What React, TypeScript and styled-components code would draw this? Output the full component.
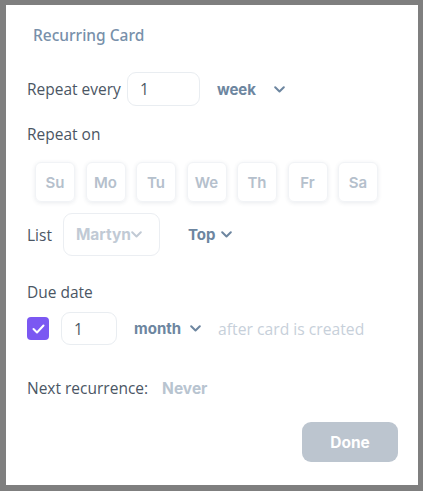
import * as React from 'react';
import styled, { createGlobalStyle } from 'styled-components';

const GlobalStyle = createGlobalStyle`
  html, body {
    margin: 0;
    padding: 0;
    background: #7f7f7f;
  }
  body {
    font-family: 'Open Sans', 'Liberation Sans', sans-serif;
  }
`;

const Frame = styled.div`
  width: 423px;
  height: 491px;
  box-sizing: border-box;
  padding: 5px 5px 6px 6px;
  background: #7f7f7f;
`;

const Panel = styled.div`
  width: 412px;
  height: 480px;
  box-sizing: border-box;
  background: #fff;
  padding: 20px 20px 0 21px;
  display: flex;
  flex-direction: column;
`;

const Title = styled.div`
  height: 20px;
  line-height: 20px;
  padding-left: 6px;
  font-family: 'Noto Sans', 'Open Sans', sans-serif;
  font-size: 15.5px;
  font-weight: 500;
  color: #7890aa;
`;

const Row = styled.div<{ $top: number; $h: number }>`
  margin-top: ${p => p.$top}px;
  height: ${p => p.$h}px;
  display: flex;
  align-items: center;
`;

const Label = styled.span<{ $mr?: number }>`
  font-size: 15.5px;
  color: #4b5664;
  margin-right: ${p => p.$mr ?? 0}px;
  white-space: nowrap;
`;

const NumberBox = styled.div<{ $w: number }>`
  width: ${p => p.$w}px;
  height: 100%;
  box-sizing: border-box;
  border: 1px solid #e9edf1;
  border-radius: 9px;
  display: flex;
  align-items: center;
  padding-left: 12px;
  font-size: 15.5px;
  color: #4b5664;
`;

const Dropdown = styled.div<{ $ml: number; $gap?: number }>`
  margin-left: ${p => p.$ml}px;
  display: flex;
  align-items: center;
  gap: ${p => p.$gap ?? 6}px;
  font-family: Inter, 'Liberation Sans', sans-serif;
  font-weight: 700;
  font-size: 15px;
  color: #6d86a0;
`;

const Days = styled.div`
  margin-top: 18px;
  height: 40px;
  padding-left: 8px;
  display: flex;
  gap: 10.5px;
`;

const Day = styled.div`
  width: 40px;
  height: 40px;
  box-sizing: border-box;
  border: 1px solid #f1f3f6;
  border-radius: 6px;
  box-shadow: 0 1px 4px rgba(40, 60, 90, 0.1);
  display: flex;
  align-items: center;
  justify-content: center;
  font-family: Inter, 'Liberation Sans', sans-serif;
  font-weight: 600;
  font-size: 15px;
  color: #b5c0cc;
`;

const ListSelect = styled.div`
  margin-left: 11px;
  width: 97px;
  height: 43px;
  box-sizing: border-box;
  border: 1px solid #ebeef2;
  border-radius: 9px;
  display: flex;
  align-items: center;
  padding-left: 12px;
  font-family: Inter, 'Liberation Sans', sans-serif;
  font-weight: 700;
  font-size: 15.5px;
  color: #c1cad5;
  overflow: hidden;
`;

const Clip = styled.span`
  width: 56px;
  margin-right: -1px;
  overflow: hidden;
  white-space: nowrap;
`;

const Check = styled.div`
  width: 22px;
  height: 23px;
  border-radius: 4px;
  background: #7b58f2;
  display: flex;
  align-items: center;
  justify-content: center;
  margin-right: 12px;
`;

const Hint = styled.span`
  margin-left: 17px;
  font-size: 15.7px;
  color: #c7d0da;
  white-space: nowrap;
`;

const Never = styled.span`
  font-family: Inter, 'Liberation Sans', sans-serif;
  font-weight: 700;
  font-size: 15.5px;
  color: #b8c4d0;
`;

const Footer = styled.div`
  margin-top: 24px;
  display: flex;
  justify-content: flex-end;
`;

const Done = styled.button`
  width: 96px;
  height: 40px;
  border: none;
  border-radius: 9px;
  background: #bcc5cf;
  color: #fff;
  font-family: Inter, 'Liberation Sans', sans-serif;
  font-weight: 700;
  font-size: 15.5px;
`;

function Chevron({ color = '#6d86a0' }: { color?: string }) {
  return (
    <svg width="11" height="7" viewBox="0 0 11 7" fill="none">
      <path d="M1.2 1.2l4.3 4.3 4.3-4.3" stroke={color} strokeWidth="2" strokeLinecap="round" strokeLinejoin="round" />
    </svg>
  );
}

const days = ['Su', 'Mo', 'Tu', 'We', 'Th', 'Fr', 'Sa'];

export default function App() {
  return (
    <Frame>
      <GlobalStyle />
      <Panel>
        <Title>Recurring Card</Title>

        <Row $top={27} $h={34}>
          <Label $mr={6}>Repeat every</Label>
          <NumberBox $w={73}>1</NumberBox>
          <Dropdown $ml={17} $gap={18}>
            week
            <Chevron />
          </Dropdown>
        </Row>

        <Row $top={18} $h={20}>
          <Label>Repeat on</Label>
        </Row>

        <Days>
          {days.map(d => (
            <Day key={d}>{d}</Day>
          ))}
        </Days>

        <Row $top={11} $h={43}>
          <Label>List</Label>
          <ListSelect>
            <Clip>Martyn</Clip>
            <Chevron color="#c1cad5" />
          </ListSelect>
          <Dropdown $ml={28}>
            Top
            <Chevron />
          </Dropdown>
        </Row>

        <Row $top={26} $h={20}>
          <Label>Due date</Label>
        </Row>

        <Row $top={10} $h={33}>
          <Check>
            <svg width="13" height="10" viewBox="0 0 13 10" fill="none">
              <path d="M1.5 5l3.5 3.5L11.5 1.5" stroke="#fff" strokeWidth="2" strokeLinecap="round" strokeLinejoin="round" />
            </svg>
          </Check>
          <NumberBox $w={56}>1</NumberBox>
          <Dropdown $ml={17} $gap={9}>
            month
            <Chevron />
          </Dropdown>
          <Hint>after card is created</Hint>
        </Row>

        <Row $top={33} $h={20}>
          <Label $mr={14}>Next recurrence:</Label>
          <Never>Never</Never>
        </Row>

        <Footer>
          <Done>Done</Done>
        </Footer>
      </Panel>
    </Frame>
  );
}
